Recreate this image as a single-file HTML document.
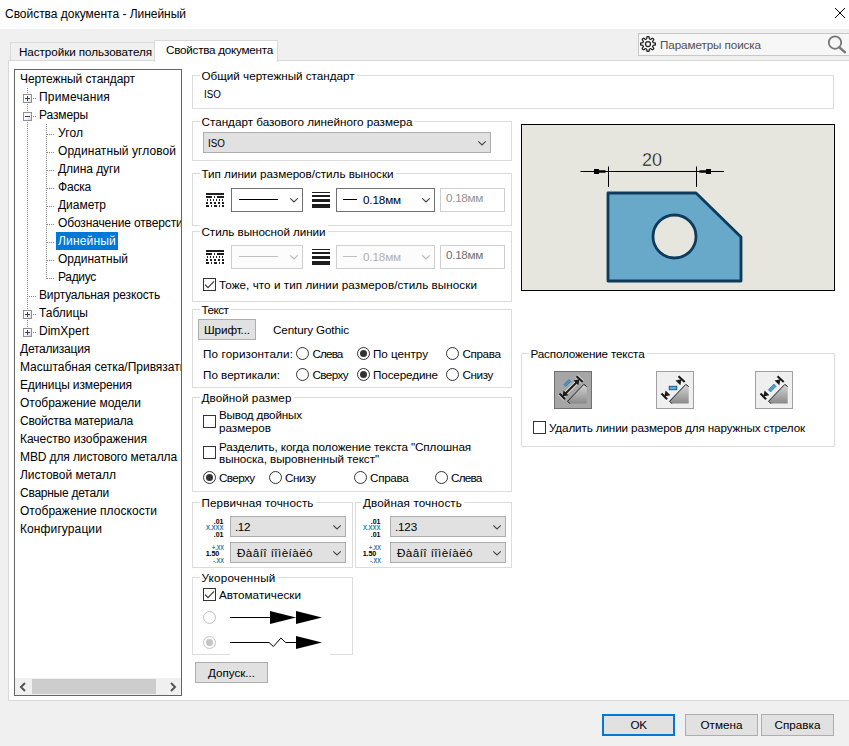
<!DOCTYPE html>
<html lang="ru"><head><meta charset="utf-8"><title>Свойства документа - Линейный</title><style>
html,body{margin:0;padding:0}
body{width:849px;height:746px;background:#f0f0f0;position:relative;overflow:hidden;font-family:"Liberation Sans", sans-serif;font-size:12px}
.t{position:absolute;white-space:nowrap;line-height:16px;height:16px}
.r{position:absolute;box-sizing:border-box}
svg{position:absolute;overflow:visible}
</style></head><body>
<div class="r" style="left:0px;top:0px;width:849px;height:29px;background:#fff"></div>
<span class="t " style="letter-spacing:-0.026px;left:5px;top:6.0px;font-size:12px;color:#000;">Свойства документа - Линейный</span>
<svg style="left:835px;top:8px" width="10" height="10"><path d="M0 0 L10 10 M10 0 L0 10" stroke="#000" stroke-width="1" fill="none"/></svg>
<div class="r" style="left:8px;top:60px;width:843px;height:641px;border:1px solid #d9d9d9;background:#ffffff"></div>
<div class="r" style="left:10px;top:42px;width:145px;height:18px;border:1px solid #d9d9d9;border-bottom:none;background:#f0f0f0"></div>
<span class="t " style="letter-spacing:-0.072px;left:19px;top:44.0px;font-size:11.7px;color:#000;">Настройки пользователя</span>
<div class="r" style="left:154px;top:40px;width:124px;height:22px;border:1px solid #d9d9d9;border-bottom:none;background:#ffffff"></div>
<span class="t " style="letter-spacing:-0.253px;left:166px;top:42.0px;font-size:11.7px;color:#000;">Свойства документа</span>
<div class="r" style="left:638px;top:33px;width:215px;height:23px;border:1px solid #c8c8c8;background:#f7f7f7"></div>
<svg style="left:640px;top:36px" width="16" height="16" viewBox="0 0 16 16"><path d="M8.00 0.60 L8.29 0.61 L8.58 0.62 L8.87 0.65 L9.11 1.02 L9.24 1.77 L9.32 2.52 L9.44 2.90 L9.64 2.96 L9.83 3.03 L10.03 3.10 L10.22 3.19 L10.41 3.28 L10.59 3.38 L10.94 3.19 L11.53 2.72 L12.15 2.29 L12.58 2.19 L12.81 2.37 L13.02 2.57 L13.23 2.77 L13.43 2.98 L13.63 3.19 L13.81 3.42 L13.71 3.85 L13.28 4.47 L12.81 5.06 L12.62 5.41 L12.72 5.59 L12.81 5.78 L12.90 5.97 L12.97 6.17 L13.04 6.36 L13.10 6.56 L13.48 6.68 L14.23 6.76 L14.98 6.89 L15.35 7.13 L15.38 7.42 L15.39 7.71 L15.40 8.00 L15.39 8.29 L15.38 8.58 L15.35 8.87 L14.98 9.11 L14.23 9.24 L13.48 9.32 L13.10 9.44 L13.04 9.64 L12.97 9.83 L12.90 10.03 L12.81 10.22 L12.72 10.41 L12.62 10.59 L12.81 10.94 L13.28 11.53 L13.71 12.15 L13.81 12.58 L13.63 12.81 L13.43 13.02 L13.23 13.23 L13.02 13.43 L12.81 13.63 L12.58 13.81 L12.15 13.71 L11.53 13.28 L10.94 12.81 L10.59 12.62 L10.41 12.72 L10.22 12.81 L10.03 12.90 L9.83 12.97 L9.64 13.04 L9.44 13.10 L9.32 13.48 L9.24 14.23 L9.11 14.98 L8.87 15.35 L8.58 15.38 L8.29 15.39 L8.00 15.40 L7.71 15.39 L7.42 15.38 L7.13 15.35 L6.89 14.98 L6.76 14.23 L6.68 13.48 L6.56 13.10 L6.36 13.04 L6.17 12.97 L5.97 12.90 L5.78 12.81 L5.59 12.72 L5.41 12.62 L5.06 12.81 L4.47 13.28 L3.85 13.71 L3.42 13.81 L3.19 13.63 L2.98 13.43 L2.77 13.23 L2.57 13.02 L2.37 12.81 L2.19 12.58 L2.29 12.15 L2.72 11.53 L3.19 10.94 L3.38 10.59 L3.28 10.41 L3.19 10.22 L3.10 10.03 L3.03 9.83 L2.96 9.64 L2.90 9.44 L2.52 9.32 L1.77 9.24 L1.02 9.11 L0.65 8.87 L0.62 8.58 L0.61 8.29 L0.60 8.00 L0.61 7.71 L0.62 7.42 L0.65 7.13 L1.02 6.89 L1.77 6.76 L2.52 6.68 L2.90 6.56 L2.96 6.36 L3.03 6.17 L3.10 5.97 L3.19 5.78 L3.28 5.59 L3.38 5.41 L3.19 5.06 L2.72 4.47 L2.29 3.85 L2.19 3.42 L2.37 3.19 L2.57 2.98 L2.77 2.77 L2.98 2.57 L3.19 2.37 L3.42 2.19 L3.85 2.29 L4.47 2.72 L5.06 3.19 L5.41 3.38 L5.59 3.28 L5.78 3.19 L5.97 3.10 L6.17 3.03 L6.36 2.96 L6.56 2.90 L6.68 2.52 L6.76 1.77 L6.89 1.02 L7.13 0.65 L7.42 0.62 L7.71 0.61Z" fill="none" stroke="#222" stroke-width="1.25" stroke-linejoin="round"/><circle cx="8" cy="8" r="2.5" fill="none" stroke="#222" stroke-width="1.25"/></svg>
<span class="t " style="letter-spacing:-0.102px;left:660px;top:37.0px;font-size:11.7px;color:#505050;">Параметры поиска</span>
<svg style="left:827px;top:35px" width="21" height="21" viewBox="0 0 21 21"><circle cx="8" cy="7.600" r="6.200" fill="none" stroke="#777" stroke-width="1.800"/><path d="M12.5 12.300 L18 17.300" stroke="#777" stroke-width="2.400" stroke-linecap="round"/></svg>
<div class="r" style="left:14px;top:69px;width:168px;height:627px;border:1px solid #646464;background:#fff"></div>
<div class="r" style="left:15px;top:70px;width:166px;height:608px;overflow:hidden">
<span class="t " style="letter-spacing:-0.086px;left:5px;top:1.0px;font-size:12px;color:#000;">Чертежный стандарт</span>
<span class="t " style="letter-spacing:0.172px;left:24px;top:19.0px;font-size:12px;color:#000;">Примечания</span>
<span class="t " style="letter-spacing:-0.125px;left:24px;top:37.0px;font-size:12px;color:#000;">Размеры</span>
<span class="t " style="letter-spacing:0.098px;left:43px;top:55.0px;font-size:12px;color:#000;">Угол</span>
<span class="t " style="letter-spacing:0.066px;left:43px;top:73.0px;font-size:12px;color:#000;">Ординатный угловой</span>
<span class="t " style="letter-spacing:-0.056px;left:43px;top:91.0px;font-size:12px;color:#000;">Длина дуги</span>
<span class="t " style="letter-spacing:-0.197px;left:43px;top:109.0px;font-size:12px;color:#000;">Фаска</span>
<span class="t " style="letter-spacing:-0.029px;left:43px;top:127.0px;font-size:12px;color:#000;">Диаметр</span>
<span class="t " style="letter-spacing:-0.131px;left:43px;top:145.0px;font-size:12px;color:#000;">Обозначение отверстия</span>
<div class="r" style="left:41px;top:162px;width:62px;height:18px;background:#0078d7"></div>
<span class="t " style="letter-spacing:0.182px;left:43px;top:163.0px;font-size:12px;color:#fff;">Линейный</span>
<span class="t " style="letter-spacing:0.006px;left:43px;top:181.0px;font-size:12px;color:#000;">Ординатный</span>
<span class="t " style="letter-spacing:-0.310px;left:43px;top:199.0px;font-size:12px;color:#000;">Радиус</span>
<span class="t " style="letter-spacing:-0.154px;left:24px;top:217.0px;font-size:12px;color:#000;">Виртуальная резкость</span>
<span class="t " style="letter-spacing:-0.002px;left:24px;top:235.0px;font-size:12px;color:#000;">Таблицы</span>
<span class="t " style="letter-spacing:-0.002px;left:24px;top:253.0px;font-size:12px;color:#000;">DimXpert</span>
<span class="t " style="letter-spacing:-0.219px;left:5px;top:271.0px;font-size:12px;color:#000;">Детализация</span>
<span class="t " style="letter-spacing:-0.007px;left:5px;top:289.0px;font-size:12px;color:#000;">Масштабная сетка/Привязать</span>
<span class="t " style="letter-spacing:-0.129px;left:5px;top:307.0px;font-size:12px;color:#000;">Единицы измерения</span>
<span class="t " style="letter-spacing:-0.016px;left:5px;top:325.0px;font-size:12px;color:#000;">Отображение модели</span>
<span class="t " style="letter-spacing:-0.192px;left:5px;top:343.0px;font-size:12px;color:#000;">Свойства материала</span>
<span class="t " style="letter-spacing:-0.029px;left:5px;top:361.0px;font-size:12px;color:#000;">Качество изображения</span>
<span class="t " style="letter-spacing:-0.114px;left:5px;top:379.0px;font-size:12px;color:#000;">MBD для листового металла</span>
<span class="t " style="letter-spacing:-0.009px;left:5px;top:397.0px;font-size:12px;color:#000;">Листовой металл</span>
<span class="t " style="letter-spacing:-0.252px;left:5px;top:415.0px;font-size:12px;color:#000;">Сварные детали</span>
<span class="t " style="letter-spacing:0.038px;left:5px;top:433.0px;font-size:12px;color:#000;">Отображение плоскости</span>
<span class="t " style="letter-spacing:0.104px;left:5px;top:451.0px;font-size:12px;color:#000;">Конфигурации</span>
</div>
<div class="r" style="left:27px;top:88px;width:1px;height:244px;background:repeating-linear-gradient(to bottom,#888 0 1px,transparent 1px 2px)"></div>
<div class="r" style="left:46px;top:124px;width:1px;height:155px;background:repeating-linear-gradient(to bottom,#888 0 1px,transparent 1px 2px)"></div>
<div class="r" style="left:47px;top:134px;width:8px;height:1px;background:repeating-linear-gradient(to right,#888 0 1px,transparent 1px 2px)"></div>
<div class="r" style="left:47px;top:152px;width:8px;height:1px;background:repeating-linear-gradient(to right,#888 0 1px,transparent 1px 2px)"></div>
<div class="r" style="left:47px;top:170px;width:8px;height:1px;background:repeating-linear-gradient(to right,#888 0 1px,transparent 1px 2px)"></div>
<div class="r" style="left:47px;top:188px;width:8px;height:1px;background:repeating-linear-gradient(to right,#888 0 1px,transparent 1px 2px)"></div>
<div class="r" style="left:47px;top:206px;width:8px;height:1px;background:repeating-linear-gradient(to right,#888 0 1px,transparent 1px 2px)"></div>
<div class="r" style="left:47px;top:224px;width:8px;height:1px;background:repeating-linear-gradient(to right,#888 0 1px,transparent 1px 2px)"></div>
<div class="r" style="left:47px;top:242px;width:8px;height:1px;background:repeating-linear-gradient(to right,#888 0 1px,transparent 1px 2px)"></div>
<div class="r" style="left:47px;top:260px;width:8px;height:1px;background:repeating-linear-gradient(to right,#888 0 1px,transparent 1px 2px)"></div>
<div class="r" style="left:47px;top:278px;width:8px;height:1px;background:repeating-linear-gradient(to right,#888 0 1px,transparent 1px 2px)"></div>
<div class="r" style="left:33px;top:98px;width:3px;height:1px;background:repeating-linear-gradient(to right,#888 0 1px,transparent 1px 2px)"></div>
<div class="r" style="left:33px;top:116px;width:3px;height:1px;background:repeating-linear-gradient(to right,#888 0 1px,transparent 1px 2px)"></div>
<div class="r" style="left:29px;top:296px;width:7px;height:1px;background:repeating-linear-gradient(to right,#888 0 1px,transparent 1px 2px)"></div>
<div class="r" style="left:33px;top:314px;width:3px;height:1px;background:repeating-linear-gradient(to right,#888 0 1px,transparent 1px 2px)"></div>
<div class="r" style="left:33px;top:332px;width:3px;height:1px;background:repeating-linear-gradient(to right,#888 0 1px,transparent 1px 2px)"></div>
<div class="r" style="left:23px;top:94px;width:9px;height:9px;border:1px solid #919191;background:linear-gradient(135deg,#fff 45%,#d4d4d4)"></div>
<div class="r" style="left:25px;top:98px;width:5px;height:1px;background:#2e3a8c"></div>
<div class="r" style="left:27px;top:96px;width:1px;height:5px;background:#2e3a8c"></div>
<div class="r" style="left:23px;top:112px;width:9px;height:9px;border:1px solid #919191;background:linear-gradient(135deg,#fff 45%,#d4d4d4)"></div>
<div class="r" style="left:25px;top:116px;width:5px;height:1px;background:#2e3a8c"></div>
<div class="r" style="left:23px;top:310px;width:9px;height:9px;border:1px solid #919191;background:linear-gradient(135deg,#fff 45%,#d4d4d4)"></div>
<div class="r" style="left:25px;top:314px;width:5px;height:1px;background:#2e3a8c"></div>
<div class="r" style="left:27px;top:312px;width:1px;height:5px;background:#2e3a8c"></div>
<div class="r" style="left:23px;top:328px;width:9px;height:9px;border:1px solid #919191;background:linear-gradient(135deg,#fff 45%,#d4d4d4)"></div>
<div class="r" style="left:25px;top:332px;width:5px;height:1px;background:#2e3a8c"></div>
<div class="r" style="left:27px;top:330px;width:1px;height:5px;background:#2e3a8c"></div>
<div class="r" style="left:15px;top:678px;width:166px;height:17px;background:#f0f0f0"></div>
<div class="r" style="left:32px;top:679px;width:124px;height:15px;background:#cdcdcd"></div>
<svg style="left:19px;top:682px" width="8" height="10"><path d="M6 1 L2 5 L6 9" stroke="#555" stroke-width="2" fill="none"/></svg>
<svg style="left:169px;top:682px" width="8" height="10"><path d="M2 1 L6 5 L2 9" stroke="#555" stroke-width="2" fill="none"/></svg>
<div class="r" style="left:192px;top:75px;width:642px;height:34px;border:1px solid #dcdcdc"></div>
<div class="r" style="left:199.5px;top:68px;width:157.0px;height:15px;background:#ffffff"></div>
<span class="t " style="letter-spacing:-0.021px;left:201.5px;top:68.0px;font-size:11.7px;color:#000;">Общий чертежный стандарт</span>
<span class="t " style="left:203.5px;top:86.0px;font-size:11.7px;color:#000;transform:scaleX(.84);transform-origin:0 50%;">ISO</span>
<div class="r" style="left:192px;top:121px;width:320px;height:40px;border:1px solid #dcdcdc"></div>
<div class="r" style="left:199.5px;top:114px;width:215.0px;height:15px;background:#ffffff"></div>
<span class="t " style="letter-spacing:0.002px;left:201.5px;top:114.0px;font-size:11.7px;color:#000;">Стандарт базового линейного размера</span>
<div class="r" style="left:203px;top:132px;width:288px;height:21px;border:1px solid #adadad;background:#e1e1e1"></div>
<svg style="left:477.5px;top:140.5px" width="8" height="5"><path d="M0.3 0.3 L4 4 L7.7 0.3" stroke="#444" stroke-width="1.1" fill="none"/></svg>
<span class="t " style="left:207.5px;top:135.0px;font-size:11.7px;color:#000;transform:scaleX(.84);transform-origin:0 50%;">ISO</span>
<div class="r" style="left:192px;top:173px;width:320px;height:53px;border:1px solid #dcdcdc"></div>
<div class="r" style="left:199.5px;top:166px;width:196.0px;height:15px;background:#ffffff"></div>
<span class="t " style="letter-spacing:-0.031px;left:201.5px;top:166.0px;font-size:11.7px;color:#000;">Тип линии размеров/стиль выноски</span>
<svg style="left:206px;top:193px" width="18" height="14" fill="#1e1e1e" shape-rendering="crispEdges"><rect x="0" y="0" width="18" height="2"/><rect x="0" y="3" width="6" height="2"/><rect x="8" y="3" width="1" height="2"/><rect x="11" y="3" width="7" height="2"/><rect x="1" y="6" width="1" height="2"/><rect x="4" y="6" width="1" height="2"/><rect x="7" y="6" width="1" height="2"/><rect x="10" y="6" width="1" height="2"/><rect x="13" y="6" width="1" height="2"/><rect x="16" y="6" width="1" height="2"/><rect x="0" y="9" width="2" height="2"/><rect x="4" y="9" width="2" height="2"/><rect x="8" y="9" width="2" height="2"/><rect x="12" y="9" width="2" height="2"/><rect x="16" y="9" width="2" height="2"/><rect x="0" y="12" width="3" height="2"/><rect x="5" y="12" width="1" height="2"/><rect x="8" y="12" width="3" height="2"/><rect x="13" y="12" width="1" height="2"/><rect x="16" y="12" width="2" height="2"/></svg>
<div class="r" style="left:231px;top:188px;width:72px;height:24px;border:1px solid #707070;background:#fff"></div>
<svg style="left:289.5px;top:198.0px" width="8" height="5"><path d="M0.3 0.3 L4 4 L7.7 0.3" stroke="#444" stroke-width="1.1" fill="none"/></svg>
<div class="r" style="left:239px;top:199px;width:39px;height:1px;background:#000"></div>
<svg style="left:312px;top:192px" width="18" height="16" fill="#1e1e1e" shape-rendering="crispEdges"><rect x="0" y="0" width="18" height="1"/><rect x="0" y="3" width="18" height="2"/><rect x="0" y="7" width="18" height="3"/><rect x="0" y="12" width="18" height="4"/></svg>
<div class="r" style="left:336px;top:188px;width:99px;height:24px;border:1px solid #707070;background:#fff"></div>
<svg style="left:421.5px;top:198.0px" width="8" height="5"><path d="M0.3 0.3 L4 4 L7.7 0.3" stroke="#444" stroke-width="1.1" fill="none"/></svg>
<div class="r" style="left:343px;top:199px;width:14px;height:1px;background:#000"></div>
<span class="t " style="letter-spacing:-0.138px;left:363px;top:192.0px;font-size:11.7px;color:#000;">0.18мм</span>
<div class="r" style="left:440px;top:188px;width:65px;height:24px;border:1px solid #d0d0d0;background:#fff"></div>
<span class="t " style="letter-spacing:-0.305px;left:446px;top:190.0px;font-size:11.7px;color:#939393;">0.18мм</span>
<div class="r" style="left:192px;top:231px;width:320px;height:71px;border:1px solid #dcdcdc"></div>
<div class="r" style="left:199.5px;top:224px;width:128.0px;height:15px;background:#ffffff"></div>
<span class="t " style="letter-spacing:-0.074px;left:201.5px;top:224.0px;font-size:11.7px;color:#000;">Стиль выносной линии</span>
<svg style="left:206px;top:250px" width="18" height="14" fill="#1e1e1e" shape-rendering="crispEdges"><rect x="0" y="0" width="18" height="2"/><rect x="0" y="3" width="6" height="2"/><rect x="8" y="3" width="1" height="2"/><rect x="11" y="3" width="7" height="2"/><rect x="1" y="6" width="1" height="2"/><rect x="4" y="6" width="1" height="2"/><rect x="7" y="6" width="1" height="2"/><rect x="10" y="6" width="1" height="2"/><rect x="13" y="6" width="1" height="2"/><rect x="16" y="6" width="1" height="2"/><rect x="0" y="9" width="2" height="2"/><rect x="4" y="9" width="2" height="2"/><rect x="8" y="9" width="2" height="2"/><rect x="12" y="9" width="2" height="2"/><rect x="16" y="9" width="2" height="2"/><rect x="0" y="12" width="3" height="2"/><rect x="5" y="12" width="1" height="2"/><rect x="8" y="12" width="3" height="2"/><rect x="13" y="12" width="1" height="2"/><rect x="16" y="12" width="2" height="2"/></svg>
<div class="r" style="left:231px;top:245px;width:72px;height:24px;border:1px solid #cfcfcf;background:#fcfcfc"></div>
<svg style="left:289.5px;top:255.0px" width="8" height="5"><path d="M0.3 0.3 L4 4 L7.7 0.3" stroke="#b5b5b5" stroke-width="1.1" fill="none"/></svg>
<div class="r" style="left:239px;top:256px;width:39px;height:1px;background:#c0c0c0"></div>
<svg style="left:312px;top:249px" width="18" height="16" fill="#1e1e1e" shape-rendering="crispEdges"><rect x="0" y="0" width="18" height="1"/><rect x="0" y="3" width="18" height="2"/><rect x="0" y="7" width="18" height="3"/><rect x="0" y="12" width="18" height="4"/></svg>
<div class="r" style="left:336px;top:245px;width:99px;height:24px;border:1px solid #cfcfcf;background:#fcfcfc"></div>
<svg style="left:421.5px;top:255.0px" width="8" height="5"><path d="M0.3 0.3 L4 4 L7.7 0.3" stroke="#b5b5b5" stroke-width="1.1" fill="none"/></svg>
<div class="r" style="left:343px;top:256px;width:14px;height:1px;background:#c0c0c0"></div>
<span class="t " style="letter-spacing:-0.138px;left:363px;top:249.0px;font-size:11.7px;color:#b0b0b0;">0.18мм</span>
<div class="r" style="left:440px;top:245px;width:65px;height:24px;border:1px solid #d0d0d0;background:#fff"></div>
<span class="t " style="letter-spacing:-0.305px;left:446px;top:247.0px;font-size:11.7px;color:#6f6f6f;">0.18мм</span>
<div class="r" style="left:203.0px;top:278.0px;width:13.0px;height:13.0px;border:1px solid #333;background:#fff"></div>
<svg style="left:203.0px;top:278.0px" width="13" height="13"><path d="M2 6.600 L5 9.600 L11 3.400" stroke="#3a3a3a" stroke-width="1.25" fill="none"/></svg>
<span class="t " style="letter-spacing:0.046px;left:219px;top:277.0px;font-size:11.7px;color:#000;">Тоже, что и тип линии размеров/стиль выноски</span>
<div class="r" style="left:192px;top:309px;width:320px;height:79px;border:1px solid #dcdcdc"></div>
<div class="r" style="left:199.5px;top:302px;width:31.0px;height:15px;background:#ffffff"></div>
<span class="t " style="letter-spacing:-0.487px;left:201.5px;top:302.0px;font-size:11.7px;color:#000;">Текст</span>
<div class="r" style="left:198px;top:319px;width:58px;height:21px;border:1px solid #adadad;background:#e1e1e1"></div>
<span class="t " style="letter-spacing:-0.113px;left:204.0px;top:321.5px;font-size:11.7px;color:#000;">Шрифт...</span>
<span class="t " style="letter-spacing:-0.140px;left:273px;top:322.0px;font-size:11.7px;color:#000;">Century Gothic</span>
<span class="t " style="letter-spacing:0.121px;left:203px;top:346.0px;font-size:11.7px;color:#000;">По горизонтали:</span>
<div class="r" style="left:296.0px;top:347.0px;width:13.0px;height:13.0px;border:1px solid #333;border-radius:50%;background:#fff"></div>
<span class="t " style="letter-spacing:-0.869px;left:312.5px;top:346.0px;font-size:11.7px;color:#000;">Слева</span>
<div class="r" style="left:357.0px;top:347.0px;width:13.0px;height:13.0px;border:1px solid #333;border-radius:50%;background:#fff"></div>
<div class="r" style="left:360.0px;top:350.0px;width:7.0px;height:7.0px;border-radius:50%;background:#333"></div>
<span class="t " style="letter-spacing:-0.026px;left:373px;top:346.0px;font-size:11.7px;color:#000;">По центру</span>
<div class="r" style="left:446.0px;top:347.0px;width:13.0px;height:13.0px;border:1px solid #333;border-radius:50%;background:#fff"></div>
<span class="t " style="letter-spacing:-0.393px;left:462.5px;top:346.0px;font-size:11.7px;color:#000;">Справа</span>
<span class="t " style="letter-spacing:-0.025px;left:203px;top:367.0px;font-size:11.7px;color:#000;">По вертикали:</span>
<div class="r" style="left:296.0px;top:368.0px;width:13.0px;height:13.0px;border:1px solid #333;border-radius:50%;background:#fff"></div>
<span class="t " style="letter-spacing:-0.596px;left:312.5px;top:367.0px;font-size:11.7px;color:#000;">Сверху</span>
<div class="r" style="left:357.0px;top:368.0px;width:13.0px;height:13.0px;border:1px solid #333;border-radius:50%;background:#fff"></div>
<div class="r" style="left:360.0px;top:371.0px;width:7.0px;height:7.0px;border-radius:50%;background:#333"></div>
<span class="t " style="letter-spacing:-0.130px;left:373px;top:367.0px;font-size:11.7px;color:#000;">Посередине</span>
<div class="r" style="left:446.0px;top:368.0px;width:13.0px;height:13.0px;border:1px solid #333;border-radius:50%;background:#fff"></div>
<span class="t " style="letter-spacing:-0.400px;left:462.5px;top:367.0px;font-size:11.7px;color:#000;">Снизу</span>
<div class="r" style="left:192px;top:397px;width:320px;height:95px;border:1px solid #dcdcdc"></div>
<div class="r" style="left:199.5px;top:390px;width:94.0px;height:15px;background:#ffffff"></div>
<span class="t " style="letter-spacing:0.070px;left:201.5px;top:390.0px;font-size:11.7px;color:#000;">Двойной размер</span>
<div class="r" style="left:203.0px;top:415.0px;width:13.0px;height:13.0px;border:1px solid #333;background:#fff"></div>
<span class="t " style="letter-spacing:-0.171px;left:219px;top:407.0px;font-size:11.7px;color:#000;">Вывод двойных</span>
<span class="t " style="letter-spacing:0.002px;left:219px;top:420.0px;font-size:11.7px;color:#000;">размеров</span>
<div class="r" style="left:203.0px;top:446.0px;width:13.0px;height:13.0px;border:1px solid #333;background:#fff"></div>
<span class="t " style="letter-spacing:-0.114px;left:219px;top:439.0px;font-size:11.7px;color:#000;">Разделить, когда положение текста "Сплошная</span>
<span class="t " style="letter-spacing:-0.072px;left:219px;top:451.0px;font-size:11.7px;color:#000;">выноска, выровненный текст"</span>
<div class="r" style="left:203.0px;top:471.0px;width:13.0px;height:13.0px;border:1px solid #333;border-radius:50%;background:#fff"></div>
<div class="r" style="left:206.0px;top:474.0px;width:7.0px;height:7.0px;border-radius:50%;background:#333"></div>
<span class="t " style="letter-spacing:-0.596px;left:219px;top:470.0px;font-size:11.7px;color:#000;">Сверху</span>
<div class="r" style="left:269.0px;top:471.0px;width:13.0px;height:13.0px;border:1px solid #333;border-radius:50%;background:#fff"></div>
<span class="t " style="letter-spacing:-0.400px;left:285px;top:470.0px;font-size:11.7px;color:#000;">Снизу</span>
<div class="r" style="left:354.0px;top:471.0px;width:13.0px;height:13.0px;border:1px solid #333;border-radius:50%;background:#fff"></div>
<span class="t " style="letter-spacing:-0.310px;left:370px;top:470.0px;font-size:11.7px;color:#000;">Справа</span>
<div class="r" style="left:435.0px;top:471.0px;width:13.0px;height:13.0px;border:1px solid #333;border-radius:50%;background:#fff"></div>
<span class="t " style="letter-spacing:-0.769px;left:451px;top:470.0px;font-size:11.7px;color:#000;">Слева</span>
<div class="r" style="left:192px;top:502px;width:161px;height:66px;border:1px solid #dcdcdc"></div>
<div class="r" style="left:199.5px;top:495px;width:116.0px;height:15px;background:#ffffff"></div>
<span class="t " style="letter-spacing:0.080px;left:201.5px;top:495.0px;font-size:11.7px;color:#000;">Первичная точность</span>
<div class="r" style="left:230px;top:516px;width:116px;height:21px;border:1px solid #adadad;background:#e1e1e1"></div>
<svg style="left:332.5px;top:524.5px" width="8" height="5"><path d="M0.3 0.3 L4 4 L7.7 0.3" stroke="#444" stroke-width="1.1" fill="none"/></svg>
<span class="t " style="letter-spacing:-0.417px;left:235px;top:519.0px;font-size:11.7px;color:#000;">.12</span>
<div class="r" style="left:230px;top:542px;width:116px;height:21px;border:1px solid #adadad;background:#e1e1e1"></div>
<svg style="left:332.5px;top:550.5px" width="8" height="5"><path d="M0.3 0.3 L4 4 L7.7 0.3" stroke="#444" stroke-width="1.1" fill="none"/></svg>
<span class="t " style="letter-spacing:0.416px;left:237px;top:545.0px;font-size:11.7px;color:#000;">Ðàâíî íîìèíàëó</span>
<div class="r" style="left:355px;top:502px;width:157px;height:66px;border:1px solid #dcdcdc"></div>
<div class="r" style="left:361px;top:495px;width:103px;height:15px;background:#ffffff"></div>
<span class="t " style="letter-spacing:0.103px;left:363px;top:495.0px;font-size:11.7px;color:#000;">Двойная точность</span>
<div class="r" style="left:390px;top:516px;width:116px;height:21px;border:1px solid #adadad;background:#e1e1e1"></div>
<svg style="left:492.5px;top:524.5px" width="8" height="5"><path d="M0.3 0.3 L4 4 L7.7 0.3" stroke="#444" stroke-width="1.1" fill="none"/></svg>
<span class="t " style="letter-spacing:-0.188px;left:395px;top:519.0px;font-size:11.7px;color:#000;">.123</span>
<div class="r" style="left:390px;top:542px;width:116px;height:21px;border:1px solid #adadad;background:#e1e1e1"></div>
<svg style="left:492.5px;top:550.5px" width="8" height="5"><path d="M0.3 0.3 L4 4 L7.7 0.3" stroke="#444" stroke-width="1.1" fill="none"/></svg>
<span class="t " style="letter-spacing:0.416px;left:397px;top:545.0px;font-size:11.7px;color:#000;">Ðàâíî íîìèíàëó</span>
<span class="t " style="letter-spacing:-0.111px;left:213.8px;top:513.8px;font-size:7px;color:#000;font-weight:bold;">.01</span>
<span class="t " style="left:205.8px;top:520.0px;font-size:7.5px;color:#2f7aa4;font-weight:bold;transform:scaleX(.79);transform-origin:0 50%;">X.XXX</span>
<span class="t " style="letter-spacing:-0.111px;left:213.8px;top:527.0px;font-size:7px;color:#000;font-weight:bold;">.01</span>
<span class="t " style="left:212.10000000000002px;top:539.5px;font-size:7px;color:#2f7aa4;font-weight:bold;transform:scaleX(.78);transform-origin:0 50%;">+.XX</span>
<span class="t " style="letter-spacing:-0.200px;left:205.8px;top:546.0px;font-size:7.2px;color:#000;font-weight:bold;">1.50</span>
<span class="t " style="left:213.20000000000002px;top:552.5px;font-size:7px;color:#2f7aa4;font-weight:bold;transform:scaleX(.8);transform-origin:0 50%;">-.XX</span>
<span class="t " style="letter-spacing:-0.111px;left:370.8px;top:513.8px;font-size:7px;color:#000;font-weight:bold;">.01</span>
<span class="t " style="left:362.8px;top:520.0px;font-size:7.5px;color:#2f7aa4;font-weight:bold;transform:scaleX(.79);transform-origin:0 50%;">X.XXX</span>
<span class="t " style="letter-spacing:-0.111px;left:370.8px;top:527.0px;font-size:7px;color:#000;font-weight:bold;">.01</span>
<span class="t " style="left:369.1px;top:539.5px;font-size:7px;color:#2f7aa4;font-weight:bold;transform:scaleX(.78);transform-origin:0 50%;">+.XX</span>
<span class="t " style="letter-spacing:-0.200px;left:362.8px;top:546.0px;font-size:7.2px;color:#000;font-weight:bold;">1.50</span>
<span class="t " style="left:370.2px;top:552.5px;font-size:7px;color:#2f7aa4;font-weight:bold;transform:scaleX(.8);transform-origin:0 50%;">-.XX</span>
<div class="r" style="left:192px;top:577px;width:161px;height:78px;border:1px solid #dcdcdc"></div>
<div class="r" style="left:199.5px;top:570px;width:78.0px;height:15px;background:#ffffff"></div>
<span class="t " style="letter-spacing:0.197px;left:201.5px;top:570.0px;font-size:11.7px;color:#000;">Укороченный</span>
<div class="r" style="left:203.0px;top:588.0px;width:13.0px;height:13.0px;border:1px solid #333;background:#fff"></div>
<svg style="left:203.0px;top:588.0px" width="13" height="13"><path d="M2 6.600 L5 9.600 L11 3.400" stroke="#3a3a3a" stroke-width="1.25" fill="none"/></svg>
<span class="t " style="letter-spacing:0.022px;left:219px;top:587.0px;font-size:11.7px;color:#000;">Автоматически</span>
<div class="r" style="left:203.0px;top:611.0px;width:13.0px;height:13.0px;border:1px solid #c4c4c4;border-radius:50%;background:#fff"></div>
<div class="r" style="left:203.0px;top:636.0px;width:13.0px;height:13.0px;border:1px solid #c4c4c4;border-radius:50%;background:#fff"></div>
<div class="r" style="left:206.0px;top:639.0px;width:7.0px;height:7.0px;border-radius:50%;background:#c4c4c4"></div>
<svg style="left:230px;top:605px" width="100" height="51"><rect x="0" y="0" width="100" height="51" fill="#fff"/><path d="M0 12.500H42" stroke="#000" stroke-width="1"/><path d="M40 6 L66 12.500 L40 19z M66 6 L92 12.500 L66 19z" fill="#000"/><path d="M0 37.500H39 L43.400 41.500 L50.900 33 L55.600 37.500 H66" stroke="#000" stroke-width="1" fill="none"/><path d="M66 31 L92 37.500 L66 44z" fill="#000"/></svg>
<div class="r" style="left:195px;top:662px;width:73px;height:21px;border:1px solid #adadad;background:#e1e1e1"></div>
<span class="t " style="letter-spacing:-0.033px;left:208.0px;top:664.5px;font-size:11.7px;color:#000;">Допуск...</span>
<div class="r" style="left:521px;top:124px;width:314px;height:167px;border:1px solid #000;background:#e6e6de"></div>
<svg style="left:521px;top:124px" width="314" height="167" viewBox="521 124 314 167">
<path d="M608 193 H696 L741 237 V281 H608 Z" fill="#68a8c8" stroke="#0e3a5c" stroke-width="2.8" stroke-linejoin="round"/>
<circle cx="674.5" cy="236.5" r="21.5" fill="#e6e6de" stroke="#0e3a5c" stroke-width="2.8"/>
<path d="M580.500 171.5 H724" stroke="#000" stroke-width="1"/>
<path d="M608.5 166.500 V187 M696.500 166.500 V187" stroke="#000" stroke-width="1"/>
<path d="M594 169 h5 v1.200 h6.500 v2.600 h-6.500 v1.200 h-5z M711 169 h-5 v1.200 h-6.500 v2.600 h6.500 v1.200 h5z" fill="#000"/>
<text x="652" y="166" font-family="Liberation Sans, sans-serif" font-size="18" text-anchor="middle" fill="#000" stroke="#e6e6de" stroke-width=".4">20</text>
</svg>
<div class="r" style="left:521px;top:353px;width:314px;height:94px;border:1px solid #dcdcdc"></div>
<div class="r" style="left:528.5px;top:346px;width:118.0px;height:15px;background:#ffffff"></div>
<span class="t " style="letter-spacing:-0.170px;left:530.5px;top:346.0px;font-size:11.7px;color:#000;">Расположение текста</span>
<div class="r" style="left:554px;top:371px;width:38px;height:38px;border:1px solid #707070;background:#a6a6a6"></div>
<svg style="left:554px;top:371px" width="38" height="38" viewBox="0 0 38 38"><defs><linearGradient id="gg554" x1="0" y1="0" x2="0" y2="1"><stop offset="0" stop-color="#d6d6d6"/><stop offset="1" stop-color="#8a8a8a"/></linearGradient></defs><path d="M29.500 13.400 L32.700 15.200 V32.500 H15.700 L13.600 30 Z" fill="url(#gg554)"/><path d="M15.900 32.700 L13.600 30.200 L29.800 13.400 L32.700 15.600" stroke="#1c1c1c" stroke-width="1" fill="none"/><path d="M5.500 22.600 L11.100 28.300 M22.500 5.300 L28.700 11" stroke="#fff" stroke-opacity=".55" stroke-width="4"/><path d="M10 24 L24 10" stroke="#fff" stroke-opacity=".55" stroke-width="4"/><path d="M10 24 L24 10" stroke="#1c1c1c" stroke-width="2"/><path d="M5.500 22.600 L11.100 28.300 M22.500 5.300 L28.700 11" stroke="#1c1c1c" stroke-width="2.2"/><path d="M8.300 25.500 L9.600 19.400 L14.400 24.200 Z M25.600 8.200 L24.300 14.300 L19.500 9.500 Z" fill="#1c1c1c"/><rect x="-3.500" y="-1.300" width="7" height="2.600" transform="translate(13.300 12) rotate(-45)" fill="#4596c8" stroke="#2a6a96" stroke-width=".6"/></svg>
<div class="r" style="left:656px;top:371px;width:38px;height:38px;border:1px solid #a0a0a0;background:#efefef"></div>
<svg style="left:656px;top:371px" width="38" height="38" viewBox="0 0 38 38"><defs><linearGradient id="gg656" x1="0" y1="0" x2="0" y2="1"><stop offset="0" stop-color="#d6d6d6"/><stop offset="1" stop-color="#8a8a8a"/></linearGradient></defs><path d="M29.500 13.400 L32.700 15.200 V32.500 H15.700 L13.600 30 Z" fill="url(#gg656)"/><path d="M15.900 32.700 L13.600 30.200 L29.800 13.400 L32.700 15.600" stroke="#1c1c1c" stroke-width="1" fill="none"/><path d="M5.500 22.600 L11.100 28.300 M22.500 5.300 L28.700 11" stroke="#fff" stroke-opacity=".55" stroke-width="4"/><path d="M5.500 22.600 L11.100 28.300 M22.500 5.300 L28.700 11" stroke="#1c1c1c" stroke-width="2.2"/><path d="M8.300 25.500 L9.600 19.400 L14.400 24.200 Z M25.600 8.200 L24.300 14.300 L19.500 9.500 Z" fill="#1c1c1c"/><rect x="13.200" y="15.300" width="7.600" height="3.400" fill="#55b0e0" stroke="#14507a" stroke-width=".9"/></svg>
<div class="r" style="left:755px;top:371px;width:38px;height:38px;border:1px solid #a0a0a0;background:#efefef"></div>
<svg style="left:755px;top:371px" width="38" height="38" viewBox="0 0 38 38"><defs><linearGradient id="gg755" x1="0" y1="0" x2="0" y2="1"><stop offset="0" stop-color="#d6d6d6"/><stop offset="1" stop-color="#8a8a8a"/></linearGradient></defs><path d="M29.500 13.400 L32.700 15.200 V32.500 H15.700 L13.600 30 Z" fill="url(#gg755)"/><path d="M15.900 32.700 L13.600 30.200 L29.800 13.400 L32.700 15.600" stroke="#1c1c1c" stroke-width="1" fill="none"/><path d="M5.500 22.600 L11.100 28.300 M22.500 5.300 L28.700 11" stroke="#fff" stroke-opacity=".55" stroke-width="4"/><path d="M5.500 22.600 L11.100 28.300 M22.500 5.300 L28.700 11" stroke="#1c1c1c" stroke-width="2.2"/><path d="M8.300 25.500 L9.600 19.400 L14.400 24.200 Z M25.600 8.200 L24.300 14.300 L19.500 9.500 Z" fill="#1c1c1c"/><rect x="-4" y="-1.600" width="8" height="3.200" transform="translate(17.200 17) rotate(-45)" fill="#4a9ccc" stroke="#2c6f9a" stroke-width=".6"/></svg>
<div class="r" style="left:533.0px;top:421.0px;width:13.0px;height:13.0px;border:1px solid #333;background:#fff"></div>
<span class="t " style="letter-spacing:-0.136px;left:549px;top:420.0px;font-size:11.7px;color:#000;">Удалить линии размеров для наружных стрелок</span>
<div class="r" style="left:602px;top:714px;width:73px;height:22px;border:2px solid #0078d7;background:#e1e1e1"></div>
<span class="t " style="letter-spacing:-0.445px;left:630.5px;top:717.0px;font-size:11.7px;color:#000;">OK</span>
<div class="r" style="left:685px;top:714px;width:73px;height:22px;border:1px solid #adadad;background:#e1e1e1"></div>
<span class="t " style="letter-spacing:0.010px;left:700.5px;top:717.0px;font-size:11.7px;color:#000;">Отмена</span>
<div class="r" style="left:761px;top:714px;width:73px;height:22px;border:1px solid #adadad;background:#e1e1e1"></div>
<span class="t " style="letter-spacing:0.020px;left:774.5px;top:717.0px;font-size:11.7px;color:#000;">Справка</span>
</body></html>
